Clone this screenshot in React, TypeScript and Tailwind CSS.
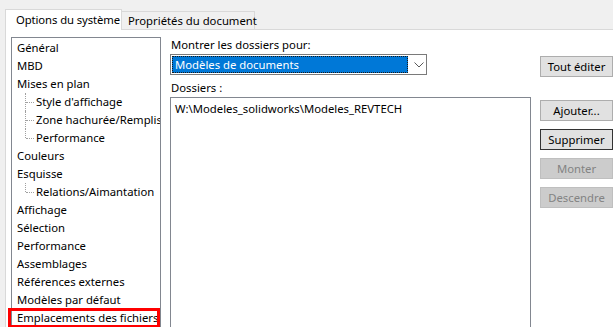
import type { ReactNode } from 'react'

/* Options dialog — "Emplacements des fichiers" page, system options tab. */

type TreeRow = { label: string; child?: boolean; last?: boolean; marked?: boolean }

const rows: TreeRow[] = [
  { label: 'Général' },
  { label: 'MBD' },
  { label: 'Mises en plan' },
  { label: "Style d'affichage", child: true },
  { label: 'Zone hachurée/Remplissage', child: true },
  { label: 'Performance', child: true, last: true },
  { label: 'Couleurs' },
  { label: 'Esquisse' },
  { label: 'Relations/Aimantation', child: true, last: true },
  { label: 'Affichage' },
  { label: 'Sélection' },
  { label: 'Performance' },
  { label: 'Assemblages' },
  { label: 'Références externes' },
  { label: 'Modèles par défaut' },
  { label: 'Emplacements des fichiers', marked: true },
]

function TreeItem({ row }: { row: TreeRow }) {
  return (
    <div className="relative flex h-[18px] items-center whitespace-nowrap">
      {row.child && (
        <>
          <span
            className={
              row.last
                ? 'absolute left-[13px] top-0 h-[9px] border-l border-dotted border-[#a0a0a0]'
                : 'absolute left-[13px] top-0 h-[18px] border-l border-dotted border-[#a0a0a0]'
            }
          />
          <span className="absolute left-[14px] top-[9px] w-[8px] border-t border-dotted border-[#a0a0a0]" />
        </>
      )}
      <span className={row.child ? 'pl-[24px]' : 'pl-[5px]'}>{row.label}</span>
      {row.marked && (
        <span className="absolute left-[-4px] top-[-1px] h-[20px] w-[152px] border-[3px] border-[#ff0000]" />
      )}
    </div>
  )
}

function Button({ children, disabled, primary }: { children: ReactNode; disabled?: boolean; primary?: boolean }) {
  return (
    <div
      className={
        disabled
          ? 'flex h-[21px] w-[73px] items-center justify-center border border-[#bfbfbf] bg-[#cccccc] text-[#838383]'
          : primary
            ? 'flex h-[21px] w-[73px] items-center justify-center border border-[#333333] bg-[#e1e1e1] text-black'
            : 'flex h-[21px] w-[73px] items-center justify-center border border-[#adadad] bg-[#e1e1e1] text-black'
      }
    >
      {children}
    </div>
  )
}

export default function App() {
  return (
    <div className="flex h-[327px] w-[613px] flex-col overflow-hidden bg-[#f0f0f0] font-['Noto_Sans','Liberation_Sans',sans-serif] text-[11.3px] leading-[16px] text-black">
      {/* tabs */}
      <div className="flex items-end whitespace-nowrap pl-[5px] pt-[9px]">
        <div className="relative z-10 -mb-px flex h-[21px] w-[117px] items-start border border-b-0 border-[#d9d9d9] bg-white pl-[10px] pt-[2px] tracking-[-0.1px]">
          Options du système
        </div>
        <div className="flex h-[18px] w-[133px] items-center border border-b-0 border-l-0 border-[#d9d9d9] bg-[#f0f0f0] pl-[6px]">
          Propriétés du document
        </div>
      </div>

      {/* page */}
      <div className="ml-[5px] flex flex-1 border-l border-t border-[#d9d9d9] bg-white pl-[5px] pt-[7px]">
        <div className="relative w-[150px] shrink-0 border border-b-0 border-[#828790] pt-[1px]">
          <div className="w-[148px] overflow-x-clip">
            {rows.slice(0, -1).map((row, i) => (
              <TreeItem key={i} row={row} />
            ))}
          </div>
          <TreeItem row={rows[rows.length - 1]} />
        </div>

        <div className="ml-[9px] flex w-[361px] shrink-0 flex-col">
          <div className="pl-[1px]">Montrer les dossiers pour:</div>
          <div className="mt-[1px] flex h-[21px] w-[257px] items-center border border-[#7a7a7a] bg-white p-[1px]">
            <div className="flex h-full w-[236px] items-center border border-dotted border-[#1a1a1a] bg-[#0078d7] pl-[2px] text-white">
              Modèles de documents
            </div>
            <svg className="ml-[6px]" width="10" height="6" viewBox="0 0 10 6" fill="none">
              <path d="M0.5 0.5 L5 5 L9.5 0.5" stroke="#5a5a5a" strokeWidth="1" />
            </svg>
          </div>
          <div className="mt-[5px] pl-[1px]">Dossiers :</div>
          <div className="mt-[1px] flex-1 border border-b-0 border-[#828790] bg-white pl-[4px] pt-[3px]">
            W:\Modeles_solidworks\Modeles_REVTECH
          </div>
        </div>

        <div className="ml-[9px] flex shrink-0 flex-col pt-[19px]">
          <Button>Tout éditer</Button>
          <div className="mt-[23px] flex flex-col gap-[8px]">
            <Button>Ajouter...</Button>
            <Button primary>Supprimer</Button>
            <Button disabled>Monter</Button>
            <Button disabled>Descendre</Button>
          </div>
        </div>
      </div>
    </div>
  )
}
